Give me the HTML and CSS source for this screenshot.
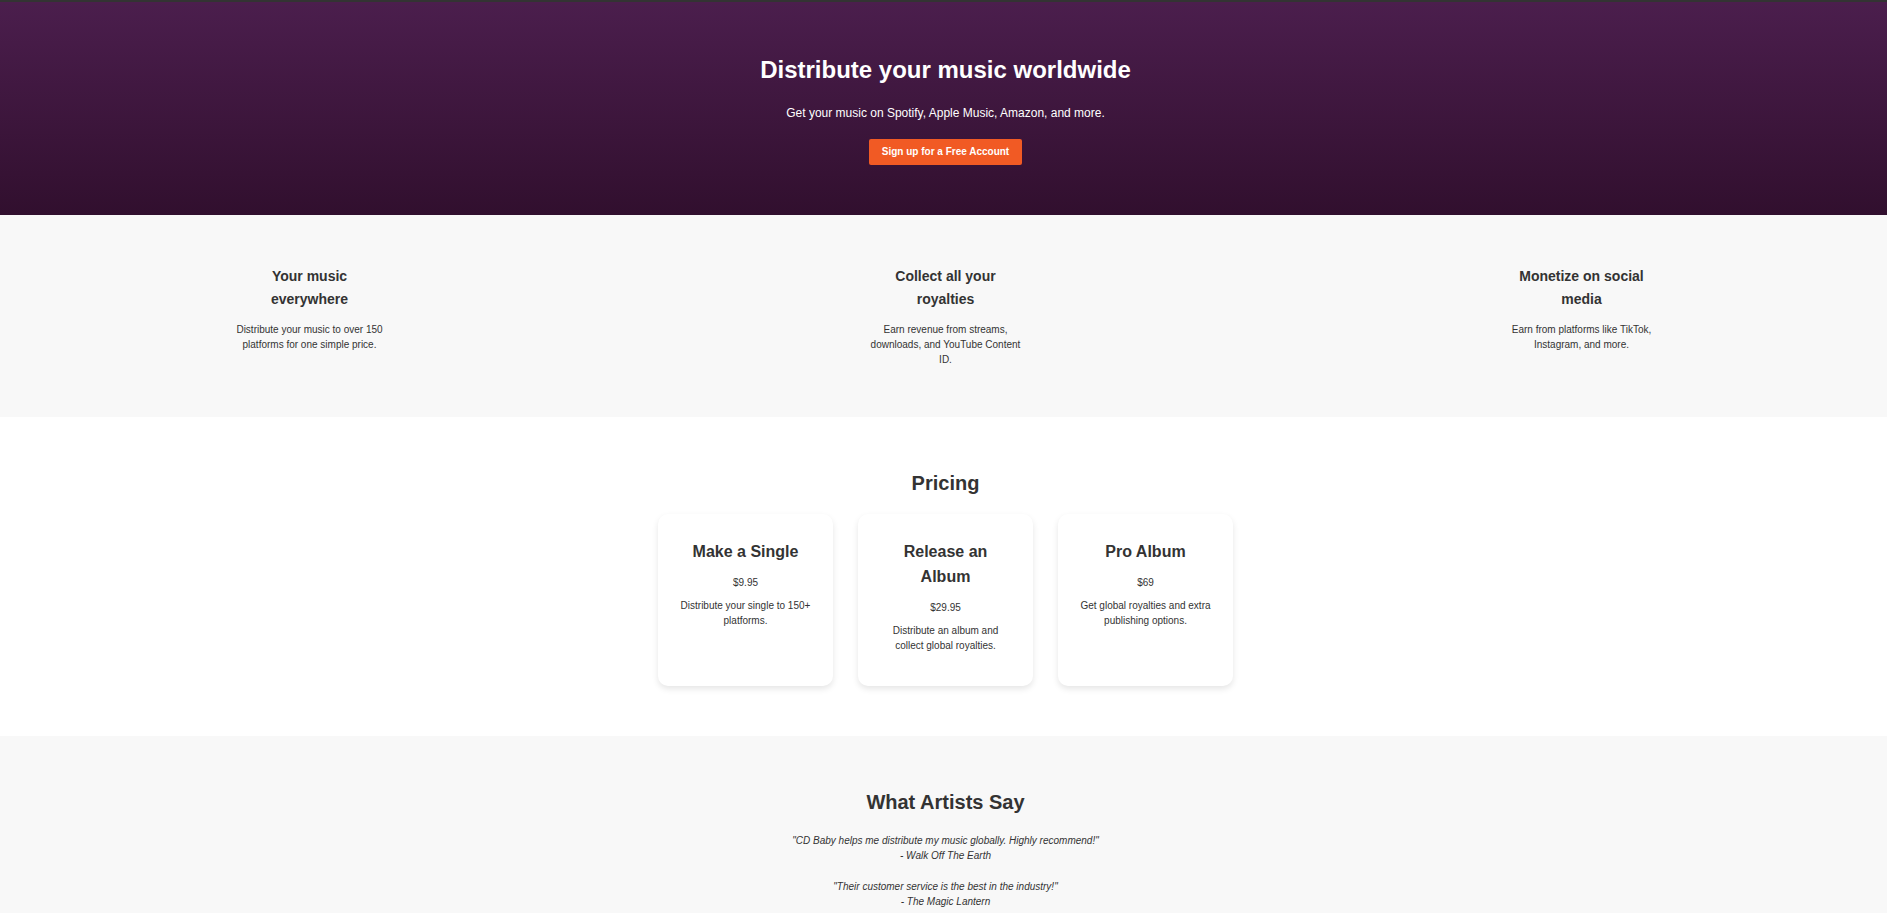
FILE: index.html
```html
<!DOCTYPE html>
<html lang="en">
<head>
<meta charset="utf-8">
<title>Distribute your music worldwide</title>
<link rel="stylesheet" href="styles.css">
</head>
<body>
<main>
  <section class="section hero">
    <h1 class="hero-title">Distribute your music worldwide</h1>
    <p class="hero-text">Get your music on Spotify, Apple Music, Amazon, and more.</p>
    <a class="cta" href="#">Sign up for a Free Account</a>
  </section>
  <section class="section features">
    <div class="feature">
      <h3 class="feature-title">Your music everywhere</h3>
      <p>Distribute your music to over 150 platforms for one simple price.</p>
    </div>
    <div class="feature">
      <h3 class="feature-title">Collect all your royalties</h3>
      <p>Earn revenue from streams, downloads, and YouTube Content ID.</p>
    </div>
    <div class="feature">
      <h3 class="feature-title">Monetize on social media</h3>
      <p>Earn from platforms like TikTok, Instagram, and more.</p>
    </div>
  </section>
  <section class="section pricing">
    <h2 class="section-title">Pricing</h2>
    <div class="cards">
      <article class="card">
        <h3 class="card-title">Make a Single</h3>
        <p class="card-text">$9.95</p>
        <p class="card-text">Distribute your single to 150+ platforms.</p>
      </article>
      <article class="card">
        <h3 class="card-title">Release an Album</h3>
        <p class="card-text">$29.95</p>
        <p class="card-text">Distribute an album and collect global royalties.</p>
      </article>
      <article class="card">
        <h3 class="card-title">Pro Album</h3>
        <p class="card-text">$69</p>
        <p class="card-text">Get global royalties and extra publishing options.</p>
      </article>
    </div>
  </section>
  <section class="section testimonials">
    <h2 class="section-title">What Artists Say</h2>
    <blockquote class="quote">"CD Baby helps me distribute my music globally. Highly recommend!"<br>- Walk Off The Earth</blockquote>
    <blockquote class="quote">"Their customer service is the best in the industry!"<br>- The Magic Lantern</blockquote>
  </section>
</main>
</body>
</html>
```
FILE: styles.css
```css
* {
  box-sizing: border-box;
  margin: 0;
  padding: 0;
}

html {
  overflow: hidden;
}

body {
  border-top: 2px solid #333;
  background: #fff;
  color: #333;
  font: 10px/15px "Liberation Sans", Arial, sans-serif;
  text-align: center;
}

.section {
  padding: 50px 0 50px 4px;
}

.hero {
  background: linear-gradient(#4b1e4d, #310f2e);
  color: #fff;
}

.hero-title {
  margin-bottom: 16px;
  font-size: 24px;
  line-height: 36px;
}

.hero-text {
  margin-bottom: 16px;
  font-size: 12px;
  line-height: 19px;
}

.cta {
  display: inline-block;
  padding: 5px 13px 6px;
  border-radius: 2px;
  background: #f15a24;
  color: #fff;
  font-weight: bold;
  text-decoration: none;
  vertical-align: top;
}

.features {
  display: flex;
  justify-content: space-around;
  gap: 25px;
  background: #f8f8f8;
}

.feature {
  width: 156px;
}

.feature-title {
  margin-bottom: 11px;
  font-size: 14px;
  line-height: 23px;
}

.section-title {
  margin-bottom: 15px;
  font-size: 20px;
  line-height: 32px;
}

.cards {
  display: flex;
  justify-content: center;
  gap: 25px;
}

.card {
  width: 175px;
  padding: 25px 21px;
  border-radius: 10px;
  background: #fff;
  box-shadow: 0 3px 6px rgba(0, 0, 0, 0.1);
}

.card-title {
  margin-bottom: 11px;
  font-size: 16px;
  line-height: 25px;
}

.card-text {
  margin-bottom: 8px;
}

.testimonials {
  background: #f8f8f8;
}

.quote {
  margin-bottom: 16px;
  font-style: italic;
}
```
